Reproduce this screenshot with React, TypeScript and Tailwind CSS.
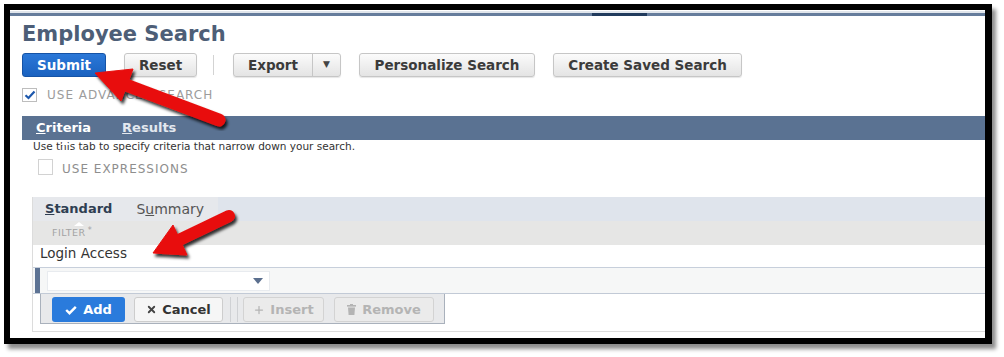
import type { ReactNode } from "react";
import { X, Plus } from "lucide-react";

function GrayButton({ className, children }: { className: string; children: ReactNode }) {
  return (
    <div
      className={
        "flex h-[24px] items-center justify-center rounded-[3px] border border-[#c6c6c6] bg-linear-to-b from-[#fbfbfb] to-[#e4e4e4] text-[13.5px] font-bold text-[#3b3b3b] shadow-[0_1px_1px_rgba(0,0,0,0.1)] " +
        className
      }
    >
      {children}
    </div>
  );
}

function Arrows() {
  return (
    <svg className="pointer-events-none absolute left-0 top-0" width="1004" height="357" viewBox="0 0 1004 357">
      <defs>
        <filter id="arrowShadow" x="-20%" y="-20%" width="140%" height="140%">
          <feDropShadow dx="2" dy="3" stdDeviation="1.8" floodColor="#000" floodOpacity="0.8" />
        </filter>
      </defs>
      <g filter="url(#arrowShadow)" fill="#e8110f" stroke="#e8110f">
        <line x1="126" y1="85" x2="219" y2="120" strokeWidth="13" strokeLinecap="round" />
        <polygon points="95,73 133,69 121,101" strokeWidth="1" strokeLinejoin="round" />
      </g>
      <g filter="url(#arrowShadow)" fill="#e8110f" stroke="#e8110f">
        <line x1="179" y1="240" x2="229" y2="216" strokeWidth="12" strokeLinecap="round" />
        <polygon points="153,253 187,255 173,225" strokeWidth="1" strokeLinejoin="round" />
      </g>
    </svg>
  );
}

export default function App() {
  return (
    <div className="relative h-[357px] w-[1004px] overflow-hidden bg-white pl-[4px] pt-[4px] font-['DejaVu_Sans',sans-serif]">
      <div className="flex h-[340px] w-[988px] flex-col border-[6px] border-r-[7px] border-black bg-white shadow-[4px_5px_4px_rgba(0,0,0,0.45)]">
        {/* page header rule */}
        <div className="mt-[1px] h-[2px] bg-[#e1e6ec]" />
        <div className="flex h-[3px] bg-[#667d9c]">
          <div className="w-[582px]" />
          <div className="w-[55px] bg-[#213b5d]" />
        </div>

        <h1 className="ml-[12px] mt-[6px] text-[21px] font-bold leading-[25px] text-[#4d5e77]">
          Employee Search
        </h1>

        {/* toolbar */}
        <div className="ml-[12px] mt-[6px] flex h-[24px] items-center">
          <div className="flex h-[24px] w-[84px] items-center justify-center rounded-[3px] border border-[#1553a6] bg-linear-to-b from-[#2b78d8] to-[#1a62c0] text-[13.5px] font-bold text-white">
            Submit
          </div>
          <GrayButton className="ml-[18px] w-[73px]">Reset</GrayButton>
          <div className="ml-[16px] h-[20px] w-px bg-[#d3d3d3]" />
          <div className="ml-[19px] flex h-[24px] w-[108px] rounded-[3px] border border-[#c6c6c6] bg-linear-to-b from-[#fbfbfb] to-[#e4e4e4] text-[13.5px] font-bold text-[#3b3b3b] shadow-[0_1px_1px_rgba(0,0,0,0.1)]">
            <div className="flex w-[78px] items-center justify-center">Export</div>
            <div className="flex flex-1 items-center justify-center border-l border-[#c6c6c6] text-[9px] text-[#444]">
              ▼
            </div>
          </div>
          <GrayButton className="ml-[18px] w-[176px]">Personalize Search</GrayButton>
          <GrayButton className="ml-[18px] w-[189px]">Create Saved Search</GrayButton>
        </div>

        {/* advanced search checkbox */}
        <div className="ml-[12px] mt-[11px] flex h-[14px] items-center">
          <div className="flex h-[14px] w-[15px] items-center justify-center border border-[#bdbdbd] bg-white">
            <svg width="12" height="10" viewBox="0 0 12 10">
              <path d="M1.5 5.2 L4.5 8 L10.5 1.5" fill="none" stroke="#1d58ad" strokeWidth="2.2" />
            </svg>
          </div>
          <span className="ml-[10px] text-[12px] tracking-[1px] text-[#9c9c9c]">USE ADVANCED SEARCH</span>
        </div>

        {/* main tabs */}
        <div className="relative ml-[12px] mt-[14px] flex h-[24px] items-center bg-[#5a7292] pl-[14px] text-[13px] font-bold">
          <span className="relative text-white">
            <span className="underline">C</span>riteria
            <span className="absolute bottom-[-7px] left-[24px] h-0 w-0 border-x-[5px] border-b-[4px] border-x-transparent border-b-white" />
          </span>
          <span className="ml-[31px] text-[#e3e8ef]">
            <span className="underline">R</span>esults
          </span>
        </div>

        <p className="ml-[23px] mt-[1px] text-[10.5px] leading-[11px] text-[#333]">
          Use this tab to specify criteria that narrow down your search.
        </p>

        {/* expressions checkbox */}
        <div className="ml-[28px] mt-[7px] flex h-[16px] items-center">
          <div className="h-[16px] w-[15px] border border-[#d2d2d2] bg-white" />
          <span className="ml-[9px] mt-[3px] text-[12px] tracking-[1px] text-[#8e8e8e]">USE EXPRESSIONS</span>
        </div>

        {/* criteria panel */}
        <div className="ml-[22px] mt-[22px] flex h-[135px] flex-col border-b border-l border-[#dcdcdc]">
          <div className="flex h-[24px] bg-[#dfe4ec]">
            <div className="flex w-[185px] items-center bg-[#e6e8ec] pl-[12px] text-[13px]">
              <span className="relative font-bold text-[#2f3e52]">
                <span className="underline">S</span>tandard
                <span className="absolute bottom-[-7px] left-[29px] h-0 w-0 border-x-[5px] border-b-[4px] border-x-transparent border-b-white" />
              </span>
              <span className="ml-[24px] text-[14px] text-[#555]">
                S<span className="underline">u</span>mmary
              </span>
            </div>
          </div>
          <div className="flex h-[24px] items-center bg-[#e6e6e5] pl-[19px] pt-[1px] text-[9.5px] tracking-[0.5px] text-[#a3a3a3]">
            FILTER<span className="relative top-[-3px] ml-[2px] text-[8px]">*</span>
          </div>
          <div className="flex h-[23px] items-start border-b border-[#c7cfdb] bg-white pl-[7px] text-[13.5px] leading-[17px] text-[#333]">
            Login Access
          </div>
          <div className="flex h-[26px] border-b border-[#c2cad6] bg-[#f6f7f7]">
            <div className="ml-[2px] w-[5px] bg-[#5d7394]" />
            <div className="ml-[7px] mt-[3px] flex h-[20px] w-[223px] items-center justify-end border border-[#e8ebef] bg-white pr-[6px]">
              <div className="h-0 w-0 border-x-[5px] border-t-[6px] border-x-transparent border-t-[#5b6f8e]" />
            </div>
          </div>
          <div className="flex h-[30px]">
            <div className="ml-[7px] flex h-[30px] w-[405px] items-start border border-t-0 border-[#a9b1bc] bg-[#e8e9eb] pl-[11px] pt-[3px]">
              <div className="flex h-[25px] w-[73px] items-center justify-center rounded-[3px] bg-[#2a7bdc] text-[13px] font-bold text-white">
                <svg width="12" height="10" viewBox="0 0 12 10" className="mr-[6px]">
                  <path d="M1.2 5 L4.5 8.2 L10.8 1.8" fill="none" stroke="#fff" strokeWidth="2.4" />
                </svg>
                Add
              </div>
              <div className="ml-[9px] flex h-[25px] w-[89px] items-center justify-center rounded-[3px] border border-[#cdcdcd] bg-[#f6f6f6] text-[13px] font-bold text-[#333]">
                <X size={11} strokeWidth={4} className="mr-[5px] text-[#444]" />
                Cancel
              </div>
              <div className="ml-[5px] flex h-[25px] w-[12px] justify-between px-[2px]">
                <div className="h-full w-px bg-[#cfd1d4]" />
                <div className="h-full w-px bg-[#cfd1d4]" />
              </div>
              <div className="ml-[3px] flex h-[25px] w-[81px] items-center justify-center rounded-[3px] border border-[#d3d3d3] bg-[#ebebeb] text-[13px] font-bold text-[#b4b4b4]">
                <Plus size={12} strokeWidth={2.5} className="mr-[5px]" />
                Insert
              </div>
              <div className="ml-[10px] flex h-[25px] w-[100px] items-center justify-center rounded-[3px] border border-[#d3d3d3] bg-[#ebebeb] text-[13px] font-bold text-[#b4b4b4]">
                <svg width="9" height="11" viewBox="0 0 9 11" className="mr-[6px]">
                  <rect x="0" y="1" width="9" height="1.6" fill="#b4b4b4" />
                  <rect x="3" y="0" width="3" height="1.2" fill="#b4b4b4" />
                  <path d="M1 3.4 H8 L7.4 11 H1.6 Z" fill="#b4b4b4" />
                </svg>
                Remove
              </div>
            </div>
          </div>
        </div>
      </div>
      <Arrows />
    </div>
  );
}
